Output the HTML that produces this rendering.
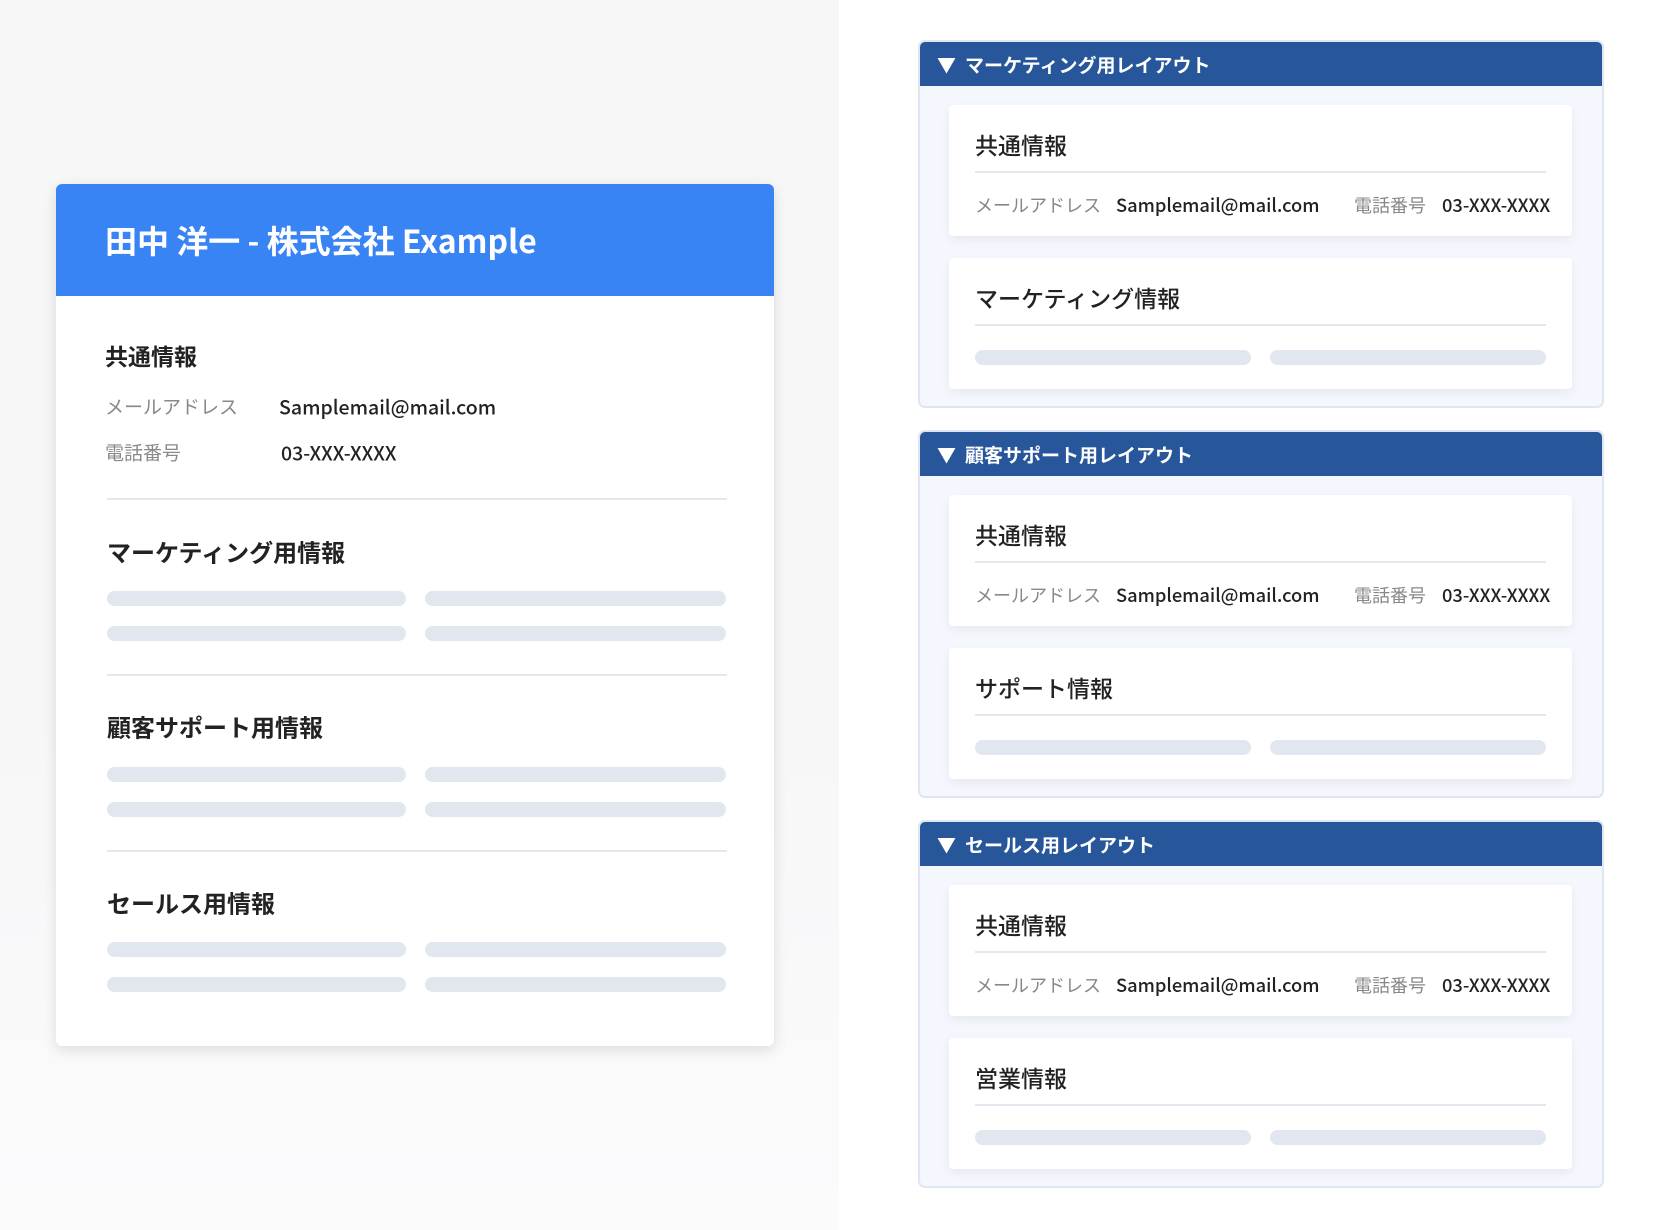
<!DOCTYPE html>
<html><head><meta charset="utf-8"><style>
*{margin:0;padding:0;box-sizing:border-box}
body{width:1680px;height:1230px;position:relative;background:#fff;font-family:"Noto Sans CJK JP","Liberation Sans",sans-serif;color:#222;overflow:hidden}
.lbg{position:absolute;left:0;top:0;width:839px;height:1230px;background:linear-gradient(#f7f7f8 0%,#f7f7f8 60%,#fbfbfc 100%)}
.card{position:absolute;left:56px;top:184px;width:718px;height:862px;background:#fff;border-radius:6px;box-shadow:0 4px 14px rgba(0,0,0,.12);overflow:hidden}
.chead{height:112px;background:#3884f4;color:#fff;font-weight:bold;font-size:32px;padding-left:49px;line-height:112px}
.a{position:absolute;white-space:nowrap}
.h{font-weight:bold;font-size:24px;transform:translateY(-50%)}
.lbl{color:#888;font-size:19px;transform:translateY(-50%)}
.val{font-size:19.5px;font-weight:500;transform:translateY(-50%)}
.line{position:absolute;height:2px;background:#e3e7ee}
.bar{position:absolute;height:15px;border-radius:8px;background:#e2e6ee}
.panel{position:absolute;left:918px;width:686px;height:368px;background:#f4f7fd;border:2px solid #e0e6ef;border-radius:7px;overflow:hidden}
.ph{height:46px;background:#27569a;color:#fff;font-weight:bold;font-size:19px;line-height:50px;padding-left:19px;margin:-2px -2px 0 -2px}
.ph span{display:inline-block;width:28px}
.ic{position:absolute;left:29px;width:623px;height:131px;background:#fff;border-radius:4px;box-shadow:0 4px 10px rgba(0,0,0,.06)}
.it{position:absolute;left:26px;top:39px;transform:translateY(-50%);font-size:23px;font-weight:500}
.il{position:absolute;left:26px;right:26px;top:66px;height:2px;background:#e3e7ee}
.ir{position:absolute;top:100px;transform:translateY(-50%);font-size:18px;white-space:nowrap}
.v{font-weight:500;font-size:18.3px}
</style></head><body>
<div class="lbg"></div>
<div class="card">
<div class="chead">田中 洋一 - 株式会社 Example</div>
<div class="a h" style="left:49px;top:171px;font-size:23px">共通情報</div>
<div class="a lbl" style="left:49px;top:222px">メールアドレス</div>
<div class="a val" style="left:223px;top:222px">Samplemail@mail.com</div>
<div class="a lbl" style="left:49px;top:268px">電話番号</div>
<div class="a val" style="left:225px;top:268px">03-XXX-XXXX</div>
<div class="line" style="left:51px;width:620px;top:314px"></div>
<div class="a h" style="left:51px;top:367px">マーケティング用情報</div>
<div class="bar" style="left:51px;width:299px;top:407px"></div><div class="bar" style="left:369px;width:301px;top:407px"></div>
<div class="bar" style="left:51px;width:299px;top:442px"></div><div class="bar" style="left:369px;width:301px;top:442px"></div>
<div class="line" style="left:51px;width:620px;top:490px"></div>
<div class="a h" style="left:51px;top:542px">顧客サポート用情報</div>
<div class="bar" style="left:51px;width:299px;top:583px"></div><div class="bar" style="left:369px;width:301px;top:583px"></div>
<div class="bar" style="left:51px;width:299px;top:618px"></div><div class="bar" style="left:369px;width:301px;top:618px"></div>
<div class="line" style="left:51px;width:620px;top:666px"></div>
<div class="a h" style="left:51px;top:718px">セールス用情報</div>
<div class="bar" style="left:51px;width:299px;top:758px"></div><div class="bar" style="left:369px;width:301px;top:758px"></div>
<div class="bar" style="left:51px;width:299px;top:793px"></div><div class="bar" style="left:369px;width:301px;top:793px"></div>
</div>

<div class="panel" style="top:40px">
<div class="ph"><span>▼</span>マーケティング用レイアウト</div>
<div class="ic" style="top:63px"><div class="it">共通情報</div><div class="il"></div>
<div class="ir" style="left:26px;color:#888">メールアドレス</div><div class="ir v" style="left:167px">Samplemail@mail.com</div>
<div class="ir" style="left:405px;color:#888">電話番号</div><div class="ir v" style="left:493px">03-XXX-XXXX</div></div>
<div class="ic" style="top:216px"><div class="it">マーケティング情報</div><div class="il"></div>
<div class="bar" style="left:26px;width:276px;top:92px"></div><div class="bar" style="left:321px;width:276px;top:92px"></div></div>
</div>

<div class="panel" style="top:430px">
<div class="ph"><span>▼</span>顧客サポート用レイアウト</div>
<div class="ic" style="top:63px"><div class="it">共通情報</div><div class="il"></div>
<div class="ir" style="left:26px;color:#888">メールアドレス</div><div class="ir v" style="left:167px">Samplemail@mail.com</div>
<div class="ir" style="left:405px;color:#888">電話番号</div><div class="ir v" style="left:493px">03-XXX-XXXX</div></div>
<div class="ic" style="top:216px"><div class="it">サポート情報</div><div class="il"></div>
<div class="bar" style="left:26px;width:276px;top:92px"></div><div class="bar" style="left:321px;width:276px;top:92px"></div></div>
</div>

<div class="panel" style="top:820px">
<div class="ph"><span>▼</span>セールス用レイアウト</div>
<div class="ic" style="top:63px"><div class="it">共通情報</div><div class="il"></div>
<div class="ir" style="left:26px;color:#888">メールアドレス</div><div class="ir v" style="left:167px">Samplemail@mail.com</div>
<div class="ir" style="left:405px;color:#888">電話番号</div><div class="ir v" style="left:493px">03-XXX-XXXX</div></div>
<div class="ic" style="top:216px"><div class="it">営業情報</div><div class="il"></div>
<div class="bar" style="left:26px;width:276px;top:92px"></div><div class="bar" style="left:321px;width:276px;top:92px"></div></div>
</div>
</body></html>
